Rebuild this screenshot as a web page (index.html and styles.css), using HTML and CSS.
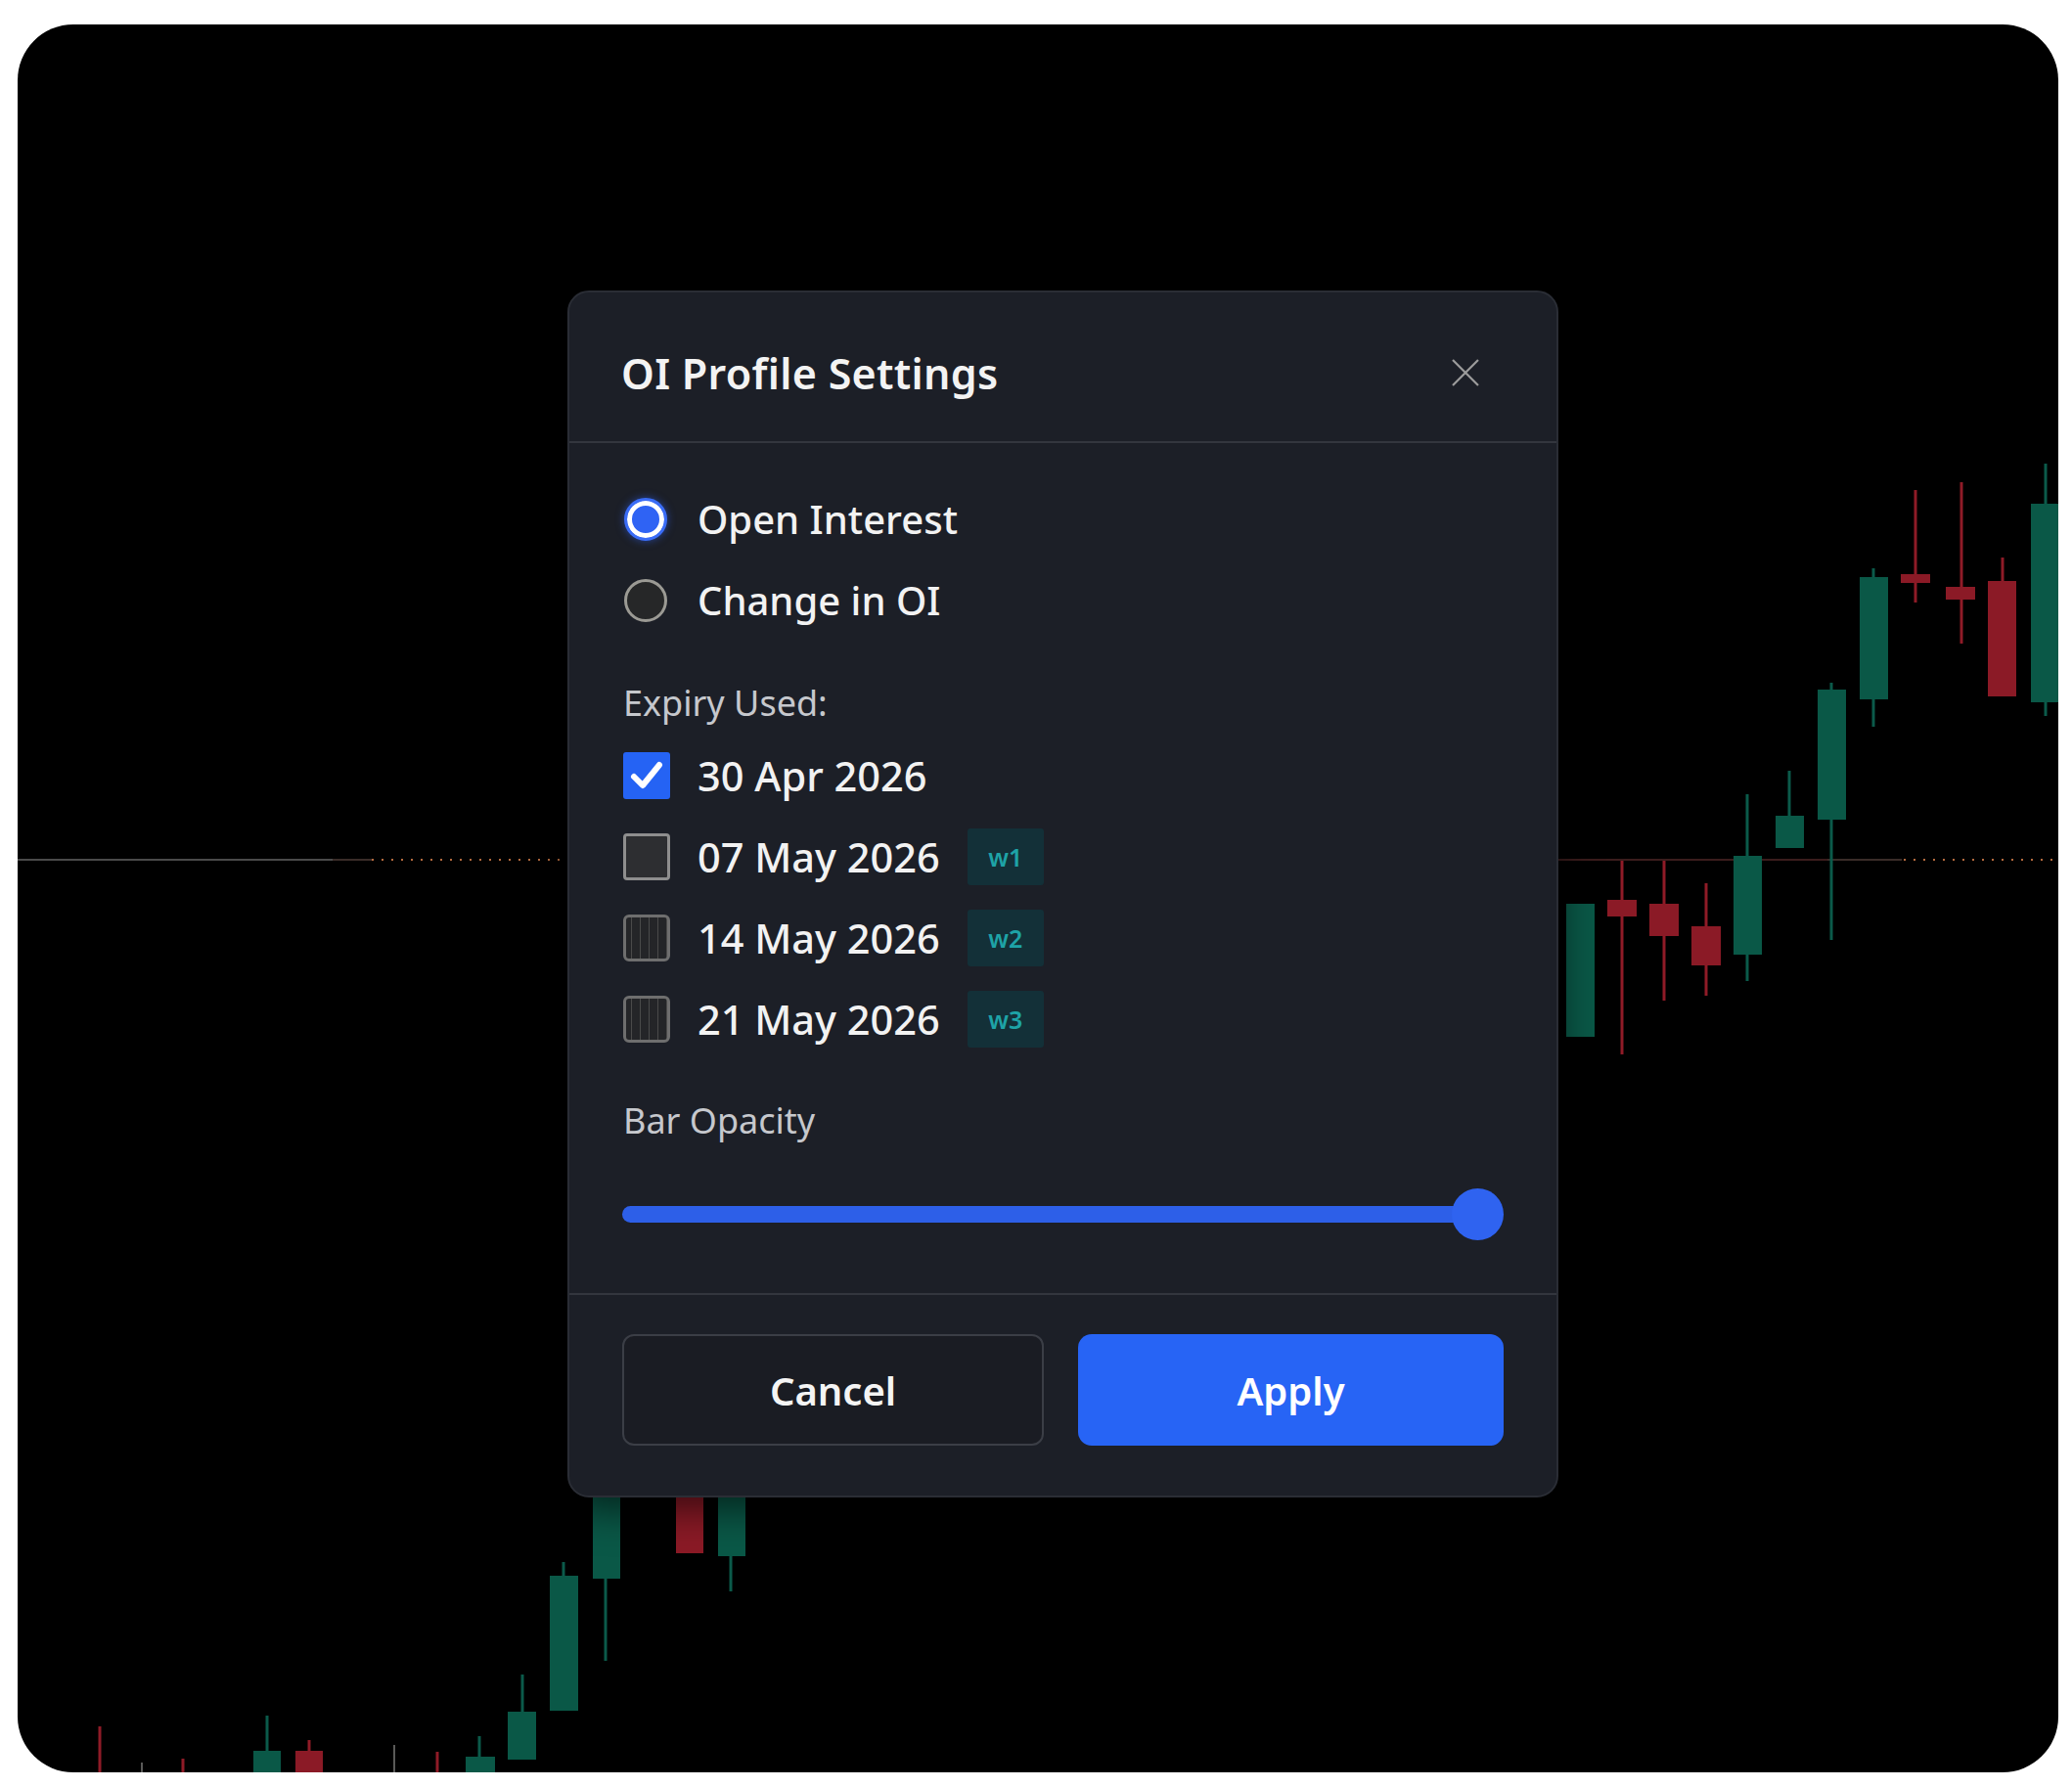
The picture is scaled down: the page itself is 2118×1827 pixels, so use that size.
FILE: index.html
```html
<!DOCTYPE html>
<html lang="en">
<head>
<meta charset="utf-8">
<title>OI Profile Settings</title>
<link rel="stylesheet" href="styles.css">
</head>
<body>
<div class="frame">
  <svg class="chart" viewBox="18 25 2086 1787" width="2086" height="1787" aria-hidden="true">
    <!-- reference line -->
    <line x1="18" y1="879" x2="340" y2="879" class="ref-solid"/>
    <line x1="340" y1="879" x2="380" y2="879" class="ref-fade"/>
    <line x1="380" y1="879" x2="578" y2="879" class="ref-dot"/>
    <line x1="1593" y1="879" x2="1868" y2="879" class="ref-red"/>
    <line x1="1868" y1="879" x2="1944" y2="879" class="ref-fade"/>
    <line x1="1946" y1="879" x2="2100" y2="879" class="ref-dot"/>

    <!-- right candles -->
    <rect class="up" x="1601" y="924" width="29" height="136"/>
    <line class="wick-dn" x1="1658" y1="880" x2="1658" y2="1078"/>
    <rect class="dn" x="1643" y="920" width="30" height="17"/>
    <line class="wick-dn" x1="1701" y1="880" x2="1701" y2="1023"/>
    <rect class="dn" x="1686" y="924" width="30" height="33"/>
    <line class="wick-dn" x1="1744" y1="903" x2="1744" y2="1018"/>
    <rect class="dn" x="1729" y="947" width="30" height="40"/>
    <line class="wick-up" x1="1786" y1="812" x2="1786" y2="1003"/>
    <rect class="up" x="1772" y="875" width="29" height="101"/>
    <line class="wick-up" x1="1829" y1="788" x2="1829" y2="834"/>
    <rect class="up" x="1815" y="834" width="29" height="33"/>
    <line class="wick-up" x1="1872" y1="698" x2="1872" y2="961"/>
    <rect class="up" x="1858" y="705" width="29" height="133"/>
    <line class="wick-up" x1="1915" y1="581" x2="1915" y2="743"/>
    <rect class="up" x="1901" y="590" width="29" height="125"/>
    <line class="wick-dn" x1="1958" y1="501" x2="1958" y2="616"/>
    <rect class="dn" x="1943" y="587" width="30" height="9"/>
    <line class="wick-dn" x1="2005" y1="493" x2="2005" y2="658"/>
    <rect class="dn" x="1989" y="600" width="30" height="13"/>
    <line class="wick-dn" x1="2047" y1="570" x2="2047" y2="594"/>
    <rect class="dn" x="2032" y="594" width="29" height="118"/>
    <line class="wick-up" x1="2091" y1="474" x2="2091" y2="732"/>
    <rect class="up" x="2076" y="515" width="29" height="203"/>

    <!-- bottom candles -->
    <line class="wick-dn" x1="102" y1="1765" x2="102" y2="1812"/>
    <line class="wick-gray" x1="145" y1="1802" x2="145" y2="1812"/>
    <line class="wick-dn" x1="187" y1="1798" x2="187" y2="1812"/>
    <line class="wick-up" x1="273" y1="1754" x2="273" y2="1790"/>
    <rect class="up" x="259" y="1790" width="28" height="30"/>
    <line class="wick-dn" x1="316" y1="1779" x2="316" y2="1790"/>
    <rect class="dn" x="302" y="1790" width="28" height="30"/>
    <line class="wick-gray" x1="403" y1="1784" x2="403" y2="1812"/>
    <line class="wick-dn" x1="447" y1="1791" x2="447" y2="1812"/>
    <line class="wick-up" x1="490" y1="1775" x2="490" y2="1796"/>
    <rect class="up" x="476" y="1796" width="30" height="24"/>
    <line class="wick-up" x1="534" y1="1712" x2="534" y2="1750"/>
    <rect class="up" x="519" y="1750" width="29" height="49"/>
    <line class="wick-up" x1="576" y1="1597" x2="576" y2="1611"/>
    <rect class="up" x="562" y="1611" width="29" height="138"/>
    <line class="wick-up" x1="619" y1="1500" x2="619" y2="1698"/>
    <rect class="up" x="606" y="1480" width="28" height="134"/>
    <rect class="dn" x="691" y="1480" width="28" height="108"/>
    <line class="wick-up" x1="747" y1="1500" x2="747" y2="1627"/>
    <rect class="up" x="734" y="1480" width="28" height="111"/>
  </svg>

  <div class="dialog" role="dialog" aria-labelledby="dlg-title">
    <header class="dialog-header">
      <h1 id="dlg-title" class="dialog-title">OI Profile Settings</h1>
      <button class="close-btn" aria-label="Close">
        <svg viewBox="0 0 30 30" width="30" height="30"><path d="M2 2 L28 28 M28 2 L2 28"/></svg>
      </button>
    </header>

    <div class="dialog-body">
      <div class="radio-row">
        <span class="radio radio-on"></span>
        <span class="row-text">Open Interest</span>
      </div>
      <div class="radio-row">
        <span class="radio radio-off"></span>
        <span class="row-text">Change in OI</span>
      </div>

      <div class="section-label label-expiry">Expiry Used:</div>

      <div class="check-list">
        <div class="check-row">
          <span class="check check-on">
            <svg viewBox="0 0 48 48" width="48" height="48"><path d="M11 25 L20 34 L37 13"/></svg>
          </span>
          <span class="row-text date-text">30 Apr 2026</span>
        </div>
        <div class="check-row">
          <span class="check check-off"></span>
          <span class="row-text date-text">07 May 2026</span>
          <span class="badge">w1</span>
        </div>
        <div class="check-row">
          <span class="check check-off check-hatch"></span>
          <span class="row-text date-text">14 May 2026</span>
          <span class="badge">w2</span>
        </div>
        <div class="check-row">
          <span class="check check-off check-hatch"></span>
          <span class="row-text date-text">21 May 2026</span>
          <span class="badge">w3</span>
        </div>
      </div>

      <div class="section-label label-opacity">Bar Opacity</div>

      <div class="slider">
        <div class="slider-track"></div>
        <div class="slider-thumb"></div>
      </div>
    </div>

    <footer class="dialog-footer">
      <button class="btn btn-cancel">Cancel</button>
      <button class="btn btn-apply">Apply</button>
    </footer>
  </div>
</div>
</body>
</html>
```

FILE: styles.css
```css
* { box-sizing: border-box; }

html, body {
  margin: 0;
  padding: 0;
  background: #ffffff;
}

body {
  width: 2118px;
  height: 1827px;
  font-family: "Noto Sans", "Open Sans", "Liberation Sans", sans-serif;
  overflow: hidden;
}

.frame {
  position: relative;
  margin: 25px 0 0 18px;
  width: 2086px;
  height: 1787px;
  background: #000;
  border-radius: 57px;
  overflow: hidden;
}

.chart {
  position: absolute;
  left: 0;
  top: 0;
  display: block;
}

.chart .up { fill: #0a5847; }
.chart .dn { fill: #8b1a26; }
.chart .wick-up { stroke: #0b5a4a; stroke-width: 3; }
.chart .wick-dn { stroke: #8f1b27; stroke-width: 3; }
.chart .wick-gray { stroke: #5a5a58; stroke-width: 2; }
.chart .ref-solid { stroke: #4a4a4a; stroke-width: 2; }
.chart .ref-fade { stroke: #3a2c28; stroke-width: 2; }
.chart .ref-red { stroke: #3b1c1c; stroke-width: 2; }
.chart .ref-dot { stroke: #b46a3e; stroke-width: 2; stroke-dasharray: 2 8; }

/* Dialog (modal overlay) */
.dialog {
  position: absolute;
  left: 562px;
  top: 272px;
  width: 1013px;
  height: 1234px;
  background: #1c1f27;
  border: 2px solid #2a2d35;
  border-radius: 22px;
  box-shadow: 0 12px 40px rgba(0, 0, 0, 0.6);
  display: flex;
  flex-direction: column;
  color: #f2f2f2;
}

.dialog-header {
  height: 154px;
  flex: none;
  display: flex;
  align-items: center;
  justify-content: space-between;
  padding: 12px 78px 0 53px;
  border-bottom: 2px solid #33363e;
}

.dialog-title {
  margin: 0;
  font-size: 43px;
  font-weight: 600;
  color: #f3f3f3;
  letter-spacing: 0.3px;
}

.close-btn {
  width: 30px;
  height: 30px;
  padding: 0;
  border: none;
  background: transparent;
  margin-top: 0;
}

.close-btn svg {
  display: block;
}

.close-btn path {
  stroke: #9c9c9c;
  stroke-width: 2.2;
  fill: none;
}

.dialog-body {
  flex: 1;
  display: flex;
  flex-direction: column;
  padding: 36px 54px 0 54px;
}

.radio-row,
.check-row {
  display: flex;
  align-items: center;
  flex: none;
}

.radio-row {
  height: 83px;
  gap: 31px;
  padding-left: 2px;
}

.check-list {
  display: flex;
  flex-direction: column;
  margin-top: 8px;
}

.check-row {
  height: 83px;
  gap: 28px;
  padding-left: 1px;
}

.row-text {
  font-size: 40px;
  font-weight: 500;
  color: #f2f2f2;
}

.date-text {
  font-size: 41.5px;
}

.radio {
  width: 44px;
  height: 44px;
  border-radius: 50%;
  flex: none;
}

.radio-on {
  background: #2f63f4;
  border: 3px solid #3a6cf6;
  box-shadow: inset 0 0 0 5px #ffffff, 0 0 8px rgba(47, 99, 244, 0.55);
}

.radio-off {
  background: #262728;
  border: 3px solid #9b9a94;
}

.section-label {
  flex: none;
  height: 50px;
  display: flex;
  align-items: center;
  font-size: 36px;
  font-weight: 400;
  color: #c6c8cd;
  padding-left: 1px;
}

.label-expiry { margin-top: 38px; }
.label-opacity { margin-top: 37px; }

.check {
  width: 48px;
  height: 48px;
  flex: none;
  border-radius: 4px;
}

.check svg { display: block; }

.check-on {
  background: #2563f4;
  border-radius: 3px;
}

.check-on path {
  stroke: #ffffff;
  stroke-width: 6;
  fill: none;
  stroke-linecap: round;
  stroke-linejoin: round;
}

.check-off {
  background: #2d2e31;
  border: 3px solid #8e8e8e;
}

.check-hatch {
  border-color: #6e6e6e;
  border-radius: 6px;
  background:
    repeating-linear-gradient(90deg, #242528 0 5px, #4a4a4a 5px 6px, #242528 6px 9px);
}

.badge {
  margin-left: 0;
  width: 78px;
  height: 58px;
  display: flex;
  align-items: center;
  justify-content: center;
  background: #133038;
  border-radius: 3px;
  color: #1ea3a7;
  font-size: 25px;
  font-weight: 600;
}

.slider {
  position: relative;
  flex: none;
  margin-top: 41px;
  height: 60px;
  display: flex;
  align-items: center;
}

.slider-track {
  width: 100%;
  height: 17px;
  margin-right: 20px;
  background: #2d5fe8;
  border-radius: 9px;
}

.slider-thumb {
  position: absolute;
  right: 0;
  top: 4px;
  width: 53px;
  height: 53px;
  border-radius: 50%;
  background: #2f63f0;
}

.dialog-footer {
  flex: none;
  height: 207px;
  border-top: 2px solid #33363e;
  display: flex;
  gap: 35px;
  padding: 40px 54px 0 54px;
}

.btn {
  height: 114px;
  border-radius: 12px;
  font-family: "Noto Sans", "Open Sans", "Liberation Sans", sans-serif;
  font-size: 40px;
  font-weight: 600;
  color: #ffffff;
}

.btn-cancel {
  width: 431px;
  background: #1a1c23;
  border: 2px solid #3b3e46;
  color: #f4f4f4;
}

.btn-apply {
  width: 435px;
  background: #2764f5;
  border: none;
  border-radius: 14px;
}
```
